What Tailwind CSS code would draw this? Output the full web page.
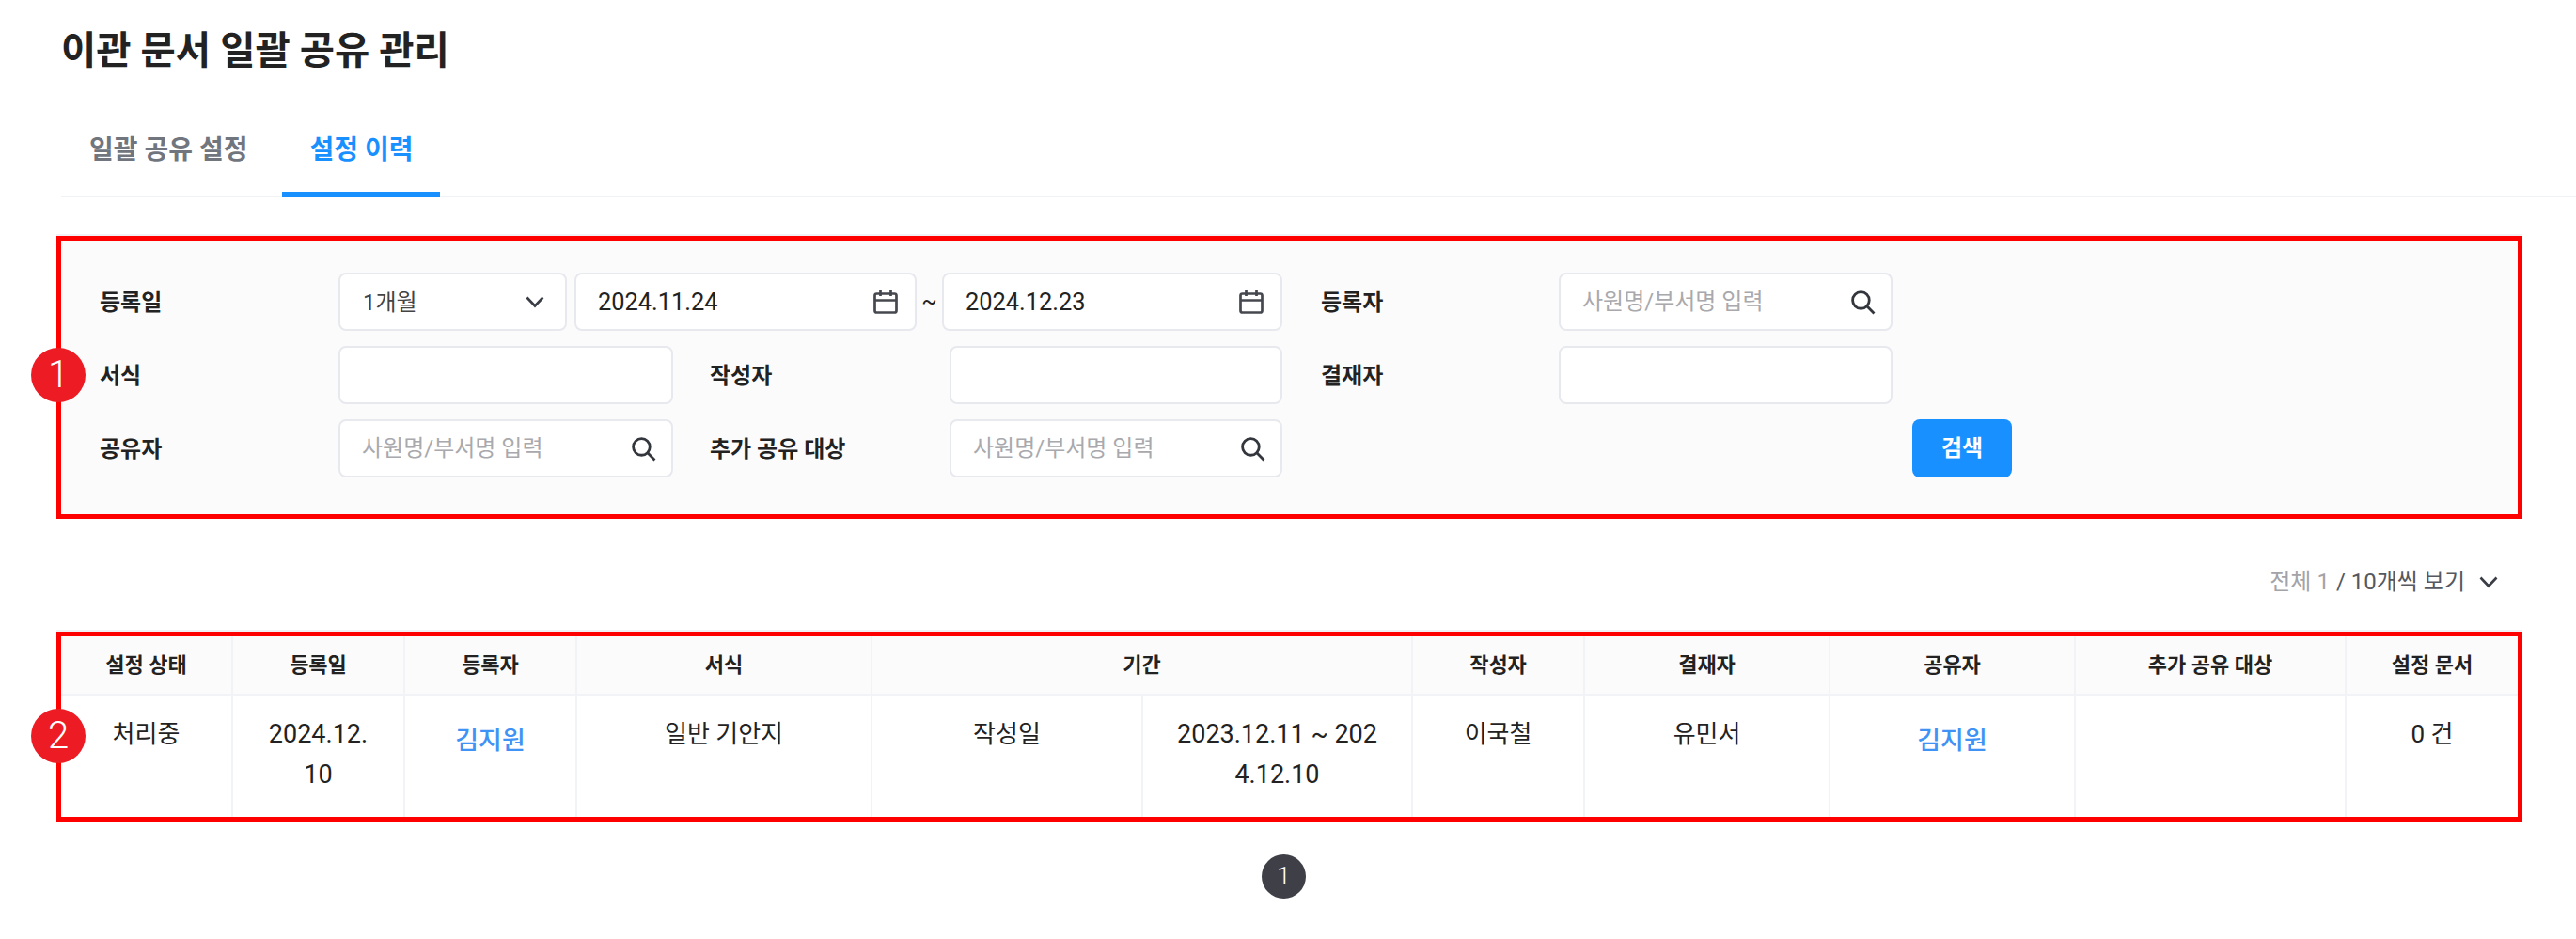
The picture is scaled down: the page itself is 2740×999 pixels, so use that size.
<!DOCTYPE html>
<html lang="ko">
<head>
    <meta charset="UTF-8">
    <meta name="viewport" content="width=device-width, initial-scale=1.0">
    <title>이관 문서 일괄 공유 관리</title>
    <script src="https://cdn.jsdelivr.net/npm/@tailwindcss/browser@4"></script>
</head>
<body class="bg-white text-[#222] font-['Roboto','Noto_Sans_CJK_KR',sans-serif]">
    <h1 class="pl-[65px] pt-[31px] text-[40.5px] leading-[46px] font-bold text-[#222]">이관 문서 일괄 공유 관리</h1>

    <nav class="ml-[65px] mt-[31px] h-[102px] flex gap-[9px] border-b-2 border-[#f0f2f5]">
        <a class="h-[102px] pl-[30px] pr-[28px] pt-[8px] border-b-[6px] border-transparent flex items-center text-[28px] font-bold text-[#71767e]">일괄 공유 설정</a>
        <a class="h-[102px] px-[29px] pt-[8px] border-b-[6px] border-[#1890ff] flex items-center text-[28px] font-bold text-[#1890ff]">설정 이력</a>
    </nav>

    <section class="relative ml-[60px] mt-[41px] w-[2623px] border-[5px] border-[#ff0000] bg-[#fbfbfb] pl-[41px] pt-[34px] pb-[39px] shadow-[0_-2px_0_#f0f2f5]">
        <span class="absolute left-[-32px] top-[114px] size-[58px] rounded-full bg-[#ed1c24] flex items-center justify-center text-white text-[40px] font-light">1</span>
        <div class="grid grid-cols-[254px_395px_255px_395px_253px_376px_106px] gap-y-[16px] items-center text-[24px]">
            <label class="pt-px font-semibold">등록일</label>
            <div class="col-span-3 flex items-center">
                <div class="w-[243px] h-[62px] pl-[24px] pr-[22px] flex items-center justify-between bg-white border-2 border-[#e8e9ee] rounded-[8px] text-[#444]">
                    <span class="pt-px">1개월</span>
                    <svg class="w-[20px] h-[13px]" viewBox="0 0 20 13" fill="none" stroke="#3a3d45" stroke-width="2.6"><path d="M1.5 1.5 10 10.5 18.5 1.5"/></svg>
                </div>
                <div class="ml-[8px] w-[364px] h-[62px] pl-[23px] pr-[18px] flex items-center justify-between bg-white border-2 border-[#e8e9ee] rounded-[8px] text-[25.4px]">
                    <span class="pt-px">2024.11.24</span>
                    <svg class="size-[26px]" viewBox="0 0 26 26" fill="none" stroke="#45484f" stroke-width="2.7"><rect x="1.5" y="4.5" width="23" height="20" rx="2"/><path d="M1.5 11.5H24.5M7.5 1V7M18.5 1V7"/></svg>
                </div>
                <span class="w-[27px] text-center text-[24px]">~</span>
                <div class="w-[362px] h-[62px] pl-[23px] pr-[18px] flex items-center justify-between bg-white border-2 border-[#e8e9ee] rounded-[8px] text-[25.4px]">
                    <span class="pt-px">2024.12.23</span>
                    <svg class="size-[26px]" viewBox="0 0 26 26" fill="none" stroke="#45484f" stroke-width="2.7"><rect x="1.5" y="4.5" width="23" height="20" rx="2"/><path d="M1.5 11.5H24.5M7.5 1V7M18.5 1V7"/></svg>
                </div>
            </div>
            <label class="pt-px font-semibold">등록자</label>
            <div class="w-[355px] h-[62px] pl-[23px] pr-[16px] flex items-center bg-white border-2 border-[#e8e9ee] rounded-[8px]">
                <input class="flex-1 min-w-0 bg-transparent outline-none placeholder:text-[#a9a9ad]" placeholder="사원명/부서명 입력">
                <svg class="size-[27px]" viewBox="0 0 26 26" fill="none" stroke="#33363d" stroke-width="2.7"><circle cx="11" cy="11" r="8.5"/><path d="M17.2 17.2 24.5 24.5"/></svg>
            </div>
            <span></span>

            <label class="pt-px font-semibold">서식</label>
            <div><input class="block w-[356px] h-[62px] bg-white border-2 border-[#e8e9ee] rounded-[8px] px-[23px] outline-none"></div>
            <label class="pt-px font-semibold">작성자</label>
            <div><input class="block w-[354px] h-[62px] bg-white border-2 border-[#e8e9ee] rounded-[8px] px-[23px] outline-none"></div>
            <label class="pt-px font-semibold">결재자</label>
            <input class="block w-[355px] h-[62px] bg-white border-2 border-[#e8e9ee] rounded-[8px] px-[23px] outline-none">
            <span></span>

            <label class="pt-px font-semibold">공유자</label>
            <div class="w-[356px] h-[62px] pl-[23px] pr-[16px] flex items-center bg-white border-2 border-[#e8e9ee] rounded-[8px]">
                <input class="flex-1 min-w-0 bg-transparent outline-none placeholder:text-[#a9a9ad]" placeholder="사원명/부서명 입력">
                <svg class="size-[27px]" viewBox="0 0 26 26" fill="none" stroke="#33363d" stroke-width="2.7"><circle cx="11" cy="11" r="8.5"/><path d="M17.2 17.2 24.5 24.5"/></svg>
            </div>
            <label class="pt-px font-semibold">추가 공유 대상</label>
            <div class="w-[354px] h-[62px] pl-[23px] pr-[16px] flex items-center bg-white border-2 border-[#e8e9ee] rounded-[8px]">
                <input class="flex-1 min-w-0 bg-transparent outline-none placeholder:text-[#a9a9ad]" placeholder="사원명/부서명 입력">
                <svg class="size-[27px]" viewBox="0 0 26 26" fill="none" stroke="#33363d" stroke-width="2.7"><circle cx="11" cy="11" r="8.5"/><path d="M17.2 17.2 24.5 24.5"/></svg>
            </div>
            <button class="col-start-7 w-[106px] h-[62px] bg-[#1890ff] text-white font-semibold rounded-[8px]">검색</button>
        </div>
    </section>

    <div class="mt-[49px] h-[36px] pr-[83px] flex items-center justify-end text-[24px]">
        <span class="text-[#a3a3a8]">전체 1</span>
        <span class="ml-[7px] text-[#55585f]">/ 10개씩 보기</span>
        <svg class="ml-[15px] w-[20px] h-[13px]" viewBox="0 0 20 13" fill="none" stroke="#3a3d45" stroke-width="2.6"><path d="M1.5 1.5 10 10.5 18.5 1.5"/></svg>
    </div>

    <section class="relative ml-[60px] mt-[35px] w-[2623px] border-[5px] border-[#ff0000] shadow-[0_-2px_0_#f0f2f5]">
        <span class="absolute left-[-32px] top-[77px] size-[58px] rounded-full bg-[#ed1c24] flex items-center justify-center text-white text-[40px] font-light z-10">2</span>
        <table class="w-[2613px] table-fixed border-separate border-spacing-0 text-[26px] text-center">
            <colgroup>
                <col class="w-[183px]"><col class="w-[183px]"><col class="w-[183px]"><col class="w-[314px]">
                <col class="w-[288px]"><col class="w-[287px]"><col class="w-[183px]"><col class="w-[261px]">
                <col class="w-[261px]"><col class="w-[288px]"><col class="w-[182px]">
            </colgroup>
            <thead>
                <tr class="h-[63px] bg-[#fbfbfb] text-[22px]">
                    <th class="font-semibold border-b-2 border-r-2 border-[#f2f3f7]">설정 상태</th>
                    <th class="font-semibold border-b-2 border-r-2 border-[#f2f3f7]">등록일</th>
                    <th class="font-semibold border-b-2 border-r-2 border-[#f2f3f7]">등록자</th>
                    <th class="font-semibold border-b-2 border-r-2 border-[#f2f3f7]">서식</th>
                    <th colspan="2" class="font-semibold border-b-2 border-r-2 border-[#f2f3f7]">기간</th>
                    <th class="font-semibold border-b-2 border-r-2 border-[#f2f3f7]">작성자</th>
                    <th class="font-semibold border-b-2 border-r-2 border-[#f2f3f7]">결재자</th>
                    <th class="font-semibold border-b-2 border-r-2 border-[#f2f3f7]">공유자</th>
                    <th class="font-semibold border-b-2 border-r-2 border-[#f2f3f7]">추가 공유 대상</th>
                    <th class="font-semibold border-b-2 border-[#f2f3f7]">설정 문서</th>
                </tr>
            </thead>
            <tbody>
                <tr class="h-[129px] align-top leading-[43px]">
                    <td class="pt-[20px] border-r-2 border-[#f2f3f7]">처리중</td>
                    <td class="pt-[20px] px-[32px] break-all border-r-2 border-[#f2f3f7] text-[27px]">2024.12.10</td>
                    <td class="pt-[27px] border-r-2 border-[#f2f3f7] text-[27px] font-medium text-[#3f93f5]">김지원</td>
                    <td class="pt-[20px] border-r-2 border-[#f2f3f7]">일반 기안지</td>
                    <td class="pt-[20px] border-r-2 border-[#f2f3f7]">작성일</td>
                    <td class="pt-[20px] px-[32px] break-all border-r-2 border-[#f2f3f7] text-[27px]">2023.12.11 ~ 2024.12.10</td>
                    <td class="pt-[20px] border-r-2 border-[#f2f3f7]">이국철</td>
                    <td class="pt-[20px] border-r-2 border-[#f2f3f7]">유민서</td>
                    <td class="pt-[27px] border-r-2 border-[#f2f3f7] text-[27px] font-medium text-[#3f93f5]">김지원</td>
                    <td class="pt-[20px] border-r-2 border-[#f2f3f7]"></td>
                    <td class="pt-[20px]">0 건</td>
                </tr>
            </tbody>
        </table>
    </section>

    <div class="mt-[35px] pr-[9px] flex justify-center">
        <span class="size-[47px] rounded-full bg-[#3f4047] text-white text-[26px] font-light flex items-center justify-center">1</span>
    </div>
</body>
</html>
